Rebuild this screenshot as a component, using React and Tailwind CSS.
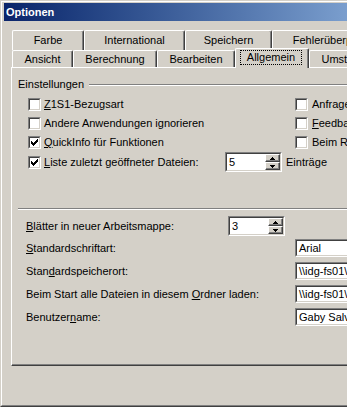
const CHECK = ["......#", ".....##", "#...###", "##.###.", "#####..", ".###...", "..#...."];

const CheckMark = () => (
  <svg width="7" height="7" viewBox="0 0 7 7" shapeRendering="crispEdges">
    {CHECK.map((row, y) =>
      row.split("").map((c, x) =>
        c === "#" ? <rect key={`${x}-${y}`} x={x} y={y} width="1" height="1" fill="#000" /> : null
      )
    )}
  </svg>
);

const Checkbox = ({ checked }) => (
  <div className="w-[13px] h-[13px] shrink-0 border border-t-[#808080] border-l-[#808080] border-b-white border-r-white">
    <div className="w-full h-full flex items-center justify-center bg-white border border-t-[#404040] border-l-[#404040] border-b-[#d4d0c8] border-r-[#d4d0c8]">
      {checked && <CheckMark />}
    </div>
  </div>
);

const Sunken = ({ className, children }) => (
  <div className={`shrink-0 border border-t-[#808080] border-l-[#808080] border-b-white border-r-white ${className}`}>
    <div className="w-full h-full flex bg-white border border-t-[#404040] border-l-[#404040] border-b-[#d4d0c8] border-r-[#d4d0c8]">
      {children}
    </div>
  </div>
);

const SpinButton = ({ up }) => (
  <div className="flex-1 flex items-center justify-center bg-[#d4d0c8] border border-t-white border-l-white border-b-[#404040] border-r-[#404040] shadow-[inset_-1px_-1px_#808080]">
    <svg width="5" height="3" viewBox="0 0 5 3" shapeRendering="crispEdges">
      {up ? (
        <path d="M2 0h1v1h-1zM1 1h3v1h-3zM0 2h5v1h-5z" fill="#000" />
      ) : (
        <path d="M0 0h5v1h-5zM1 1h3v1h-3zM2 2h1v1h-1z" fill="#000" />
      )}
    </svg>
  </div>
);

const Spinner = ({ value }) => (
  <Sunken className="w-[57px] h-[20px]">
    <div className="flex-1 flex items-center pl-[2px]">{value}</div>
    <div className="w-[15px] flex flex-col">
      <SpinButton up />
      <SpinButton />
    </div>
  </Sunken>
);

const TextBox = ({ value }) => (
  <Sunken className="w-[130px] h-[18px]">
    <div className="flex items-center pl-[2px] whitespace-nowrap">{value}</div>
  </Sunken>
);

const Tab = ({ label, w }) => (
  <div
    className={`${w} h-full shrink-0 flex items-center justify-center bg-[#d4d0c8] rounded-t-[2px] border-l border-t border-white border-r border-r-[#404040] shadow-[inset_-1px_0_#808080] whitespace-nowrap`}
  >
    {label}
  </div>
);

const Etched = ({ className }) => (
  <div className={`h-[2px] border-t border-[#808080] border-b border-b-white ${className}`}></div>
);

export default function App() {
  return (
    <div className="w-[347px] h-[407px] overflow-hidden bg-[#d4d0c8] text-[11px] leading-none text-black font-['Tahoma','Liberation_Sans',sans-serif]">
      <div className="h-full border-t border-l border-[#d4d0c8] border-b border-b-[#404040]">
        <div className="h-full border-t border-l border-white border-b border-b-[#808080] pt-[1px] pl-[2px]">
          {/* Title bar */}
          <div className="w-[460px] h-[18px] flex items-center pl-[2px] bg-gradient-to-r from-[#0a246a] to-[#a6caf0]">
            <span className="text-white font-bold text-[11px]">Optionen</span>
          </div>

          {/* Tab control */}
          <div className="w-[420px] mt-[9px] ml-[7px]">
            <div className="h-[20px] flex pl-[1px]">
              <Tab label="Farbe" w="w-[72px]" />
              <Tab label="International" w="w-[101px]" />
              <Tab label="Speichern" w="w-[87px]" />
              <Tab label="Fehlerüberprüfung" w="w-[132px]" />
            </div>
            <div className="relative h-[17px] flex items-start pl-[1px]">
              <Tab label="Ansicht" w="w-[61px]" />
              <Tab label="Berechnung" w="w-[84px]" />
              <Tab label="Bearbeiten" w="w-[78px]" />
              <div className="relative z-10 w-[74px] h-[20px] -mt-[2px] shrink-0 bg-[#d4d0c8] rounded-t-[2px] border-l border-t border-white border-r border-r-[#404040] shadow-[inset_-1px_0_#808080] pt-[1px] pl-[4px] pr-[6px]">
                <div className="h-[15px] flex items-center justify-center border border-dotted border-black">
                  Allgemein
                </div>
              </div>
              <Tab label="Umstellung" w="w-[80px]" />
            </div>

            {/* Panel */}
            <div className="h-[299px] border-t border-l border-white border-b border-b-[#404040] shadow-[inset_0_-1px_#808080]">
              <div className="flex items-center h-[13px] mt-[10px] pl-[6px]">
                <span>Einstellungen</span>
                <Etched className="flex-1 ml-[5px]" />
              </div>

              <div className="flex mt-[4px] pl-[16px]">
                <div className="w-[267px] shrink-0 flex flex-col">
                  <div className="h-[19px] flex items-center gap-[3px]">
                    <Checkbox />
                    <span><u>Z</u>1S1-Bezugsart</span>
                  </div>
                  <div className="h-[19px] flex items-center gap-[3px]">
                    <Checkbox />
                    <span>Andere Anwendungen ignorieren</span>
                  </div>
                  <div className="h-[19px] flex items-center gap-[3px]">
                    <Checkbox checked />
                    <span><u>Q</u>uickInfo für Funktionen</span>
                  </div>
                </div>
                <div className="shrink-0 flex flex-col">
                  <div className="h-[19px] flex items-center gap-[4px] whitespace-nowrap">
                    <Checkbox />
                    <span>Anfrage nach Zusammenfassungsinfo</span>
                  </div>
                  <div className="h-[19px] flex items-center gap-[4px] whitespace-nowrap">
                    <Checkbox />
                    <span><u>F</u>eedback mit Sound</span>
                  </div>
                  <div className="h-[19px] flex items-center gap-[4px] whitespace-nowrap">
                    <Checkbox />
                    <span>Beim Rollen mit IntelliMouse zoomen</span>
                  </div>
                </div>
              </div>

              <div className="h-[20px] flex items-center pl-[16px]">
                <Checkbox checked />
                <span className="w-[184px] shrink-0 pl-[3px] whitespace-nowrap">
                  <u>L</u>iste zuletzt geöffneter Dateien:
                </span>
                <Spinner value="5" />
                <span className="ml-[4px]">Einträ<u>g</u>e</span>
              </div>

              <Etched className="mt-[36px] ml-[6px]" />

              <div className="flex flex-col pl-[14px] mt-[6px]">
                <div className="h-[20px] flex items-center">
                  <span className="w-[202px] shrink-0 whitespace-nowrap"><u>B</u>lätter in neuer Arbeitsmappe:</span>
                  <Spinner value="3" />
                </div>
                <div className="h-[18px] mt-[3px] flex items-center">
                  <span className="w-[269px] shrink-0 whitespace-nowrap"><u>S</u>tandardschriftart:</span>
                  <TextBox value="Arial" />
                </div>
                <div className="h-[18px] mt-[5px] flex items-center">
                  <span className="w-[269px] shrink-0 whitespace-nowrap">Stan<u>d</u>ardspeicherort:</span>
                  <TextBox value={"\\\\idg-fs01\\users"} />
                </div>
                <div className="h-[18px] mt-[5px] flex items-center">
                  <span className="w-[269px] shrink-0 whitespace-nowrap">Beim Start alle Dateien in diesem <u>O</u>rdner laden:</span>
                  <TextBox value={"\\\\idg-fs01\\start"} />
                </div>
                <div className="h-[18px] mt-[5px] flex items-center">
                  <span className="w-[269px] shrink-0 whitespace-nowrap">Benutzer<u>n</u>ame:</span>
                  <TextBox value="Gaby Salvisberg" />
                </div>
              </div>
            </div>
          </div>
        </div>
      </div>
    </div>
  );
}
